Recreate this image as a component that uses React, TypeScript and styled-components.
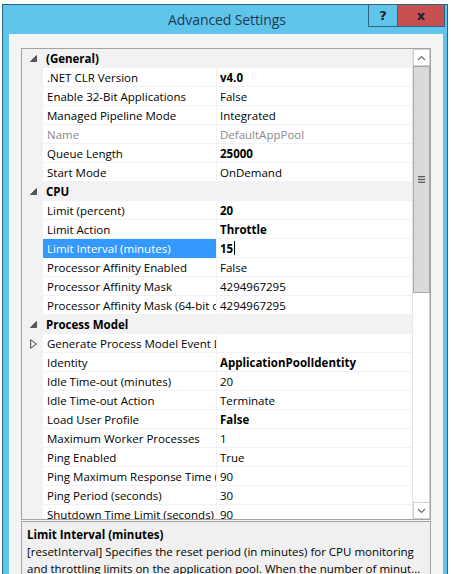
import styled, { createGlobalStyle } from 'styled-components'

const GlobalStyle = createGlobalStyle`
  html, body {
    margin: 0;
    background: #ffffff;
    overflow: hidden;
  }
  body {
    font-family: 'Open Sans', 'Noto Sans', sans-serif;
    color: #000;
  }
`

const Window = styled.div`
  margin: 4px 0 0 2px;
  width: 446px;
  height: 570px;
  box-sizing: border-box;
  border: 1px solid #2d6480;
  border-bottom: none;
  background: #60c5ea;
  padding: 0 4px 0 6px;
  display: flex;
  flex-direction: column;
`

const TitleBar = styled.div`
  height: 29px;
  flex-shrink: 0;
  display: grid;
  grid-template-columns: 1fr auto 1fr;
  margin-right: -2px;
`

const Title = styled.div`
  grid-column: 2;
  align-self: center;
  font-size: 14px;
  color: #1c3a4f;
  letter-spacing: -0.1px;
`

const CaptionButtons = styled.div`
  grid-column: 3;
  justify-self: end;
  align-self: start;
  display: flex;
  height: 21px;
  border: 1px solid #2d6480;
  border-top: none;
`

const CaptionButton = styled.div<{ $close?: boolean; $w: number }>`
  width: ${({ $w }) => $w}px;
  display: flex;
  align-items: center;
  justify-content: center;
  background: ${({ $close }) => ($close ? '#c75050' : '#60c5ea')};
  border-left: ${({ $close }) => ($close ? '1px solid #2d6480' : 'none')};
  font-family: 'DejaVu Sans', sans-serif;
  font-weight: 700;
  font-size: 13px;
  color: #1a2030;
`

const Panel = styled.div`
  flex: 1;
  min-height: 0;
  background: #f4f3f6;
  padding: 14px 12px 0 12px;
  display: flex;
  flex-direction: column;
  gap: 1px;
`

const Grid = styled.div`
  height: 472px;
  flex-shrink: 0;
  box-sizing: border-box;
  border: 1px solid #a3a3a3;
  background: #ffffff;
  display: flex;
`

const Rows = styled.div`
  flex: 1;
  overflow: hidden;
  font-size: 11.5px;
`

const RowLine = styled.div`
  height: 19px;
  display: grid;
  grid-template-columns: 21px 174px 1fr;
  align-items: stretch;
  background: #f2f1f4;
`

const Gutter = styled.div`
  display: flex;
  align-items: center;
  justify-content: center;
  padding-left: 1px;
`

const CatLabel = styled.div`
  grid-column: 2 / 4;
  display: flex;
  align-items: center;
  padding-left: 3px;
  font-weight: 700;
`

const NameCell = styled.div<{ $selected?: boolean; $disabled?: boolean }>`
  display: flex;
  align-items: center;
  padding-left: 4px;
  white-space: nowrap;
  overflow: hidden;
  background: ${({ $selected }) => ($selected ? '#3399ff' : '#ffffff')};
  color: ${({ $selected, $disabled }) => ($selected ? '#ffffff' : $disabled ? '#8a8a8a' : '#000')};
  border-bottom: 1px solid ${({ $selected }) => ($selected ? '#3399ff' : '#f2f1f4')};
  margin-right: 1px;
`

const ValueCell = styled.div<{ $bold?: boolean; $disabled?: boolean }>`
  display: flex;
  align-items: center;
  padding-left: 3px;
  white-space: nowrap;
  overflow: hidden;
  background: #ffffff;
  font-weight: ${({ $bold }) => ($bold ? 700 : 400)};
  color: ${({ $disabled }) => ($disabled ? '#8a8a8a' : '#000')};
  border-bottom: 1px solid #f2f1f4;
`

const Caret = styled.span`
  display: inline-block;
  width: 1px;
  height: 14px;
  margin-left: 1px;
  background: #000;
`

const ScrollBar = styled.div`
  width: 17px;
  display: flex;
  flex-direction: column;
  border-left: 1px solid #e6e6e6;
  background: #ffffff;
`

const ArrowButton = styled.div`
  height: 17px;
  box-sizing: border-box;
  border: 1px solid #d0d0d0;
  display: flex;
  align-items: center;
  justify-content: center;
  background: #ffffff;
`

const Thumb = styled.div`
  height: 227px;
  box-sizing: border-box;
  background: #dadada;
  border: 1px solid #a8a8a8;
  display: flex;
  align-items: center;
  justify-content: center;
`

const Track = styled.div`
  flex: 1;
  border-right: 1px solid #d0d0d0;
`

const Description = styled.div`
  flex: 1;
  min-height: 0;
  border: 1px solid #a3a3a3;
  border-bottom: none;
  background: #f0f0f0;
  padding: 5px 5px 0 5px;
  font-size: 11.5px;
  overflow: hidden;
`

const DescTitle = styled.div`
  font-weight: 700;
  line-height: 16px;
`

const DescLine = styled.div`
  line-height: 17px;
  white-space: nowrap;
  overflow: hidden;
  text-overflow: ellipsis;
`

type Row =
  | { kind: 'cat'; label: string }
  | {
      kind: 'prop'
      name: string
      value: string
      bold?: boolean
      disabled?: boolean
      selected?: boolean
      expandable?: boolean
    }

const rows: Row[] = [
  { kind: 'cat', label: '(General)' },
  { kind: 'prop', name: '.NET CLR Version', value: 'v4.0', bold: true },
  { kind: 'prop', name: 'Enable 32-Bit Applications', value: 'False' },
  { kind: 'prop', name: 'Managed Pipeline Mode', value: 'Integrated' },
  { kind: 'prop', name: 'Name', value: 'DefaultAppPool', disabled: true },
  { kind: 'prop', name: 'Queue Length', value: '25000', bold: true },
  { kind: 'prop', name: 'Start Mode', value: 'OnDemand' },
  { kind: 'cat', label: 'CPU' },
  { kind: 'prop', name: 'Limit (percent)', value: '20', bold: true },
  { kind: 'prop', name: 'Limit Action', value: 'Throttle', bold: true },
  { kind: 'prop', name: 'Limit Interval (minutes)', value: '15', bold: true, selected: true },
  { kind: 'prop', name: 'Processor Affinity Enabled', value: 'False' },
  { kind: 'prop', name: 'Processor Affinity Mask', value: '4294967295' },
  { kind: 'prop', name: 'Processor Affinity Mask (64-bit option)', value: '4294967295' },
  { kind: 'cat', label: 'Process Model' },
  { kind: 'prop', name: 'Generate Process Model Event Log Entry', value: '', expandable: true },
  { kind: 'prop', name: 'Identity', value: 'ApplicationPoolIdentity', bold: true },
  { kind: 'prop', name: 'Idle Time-out (minutes)', value: '20' },
  { kind: 'prop', name: 'Idle Time-out Action', value: 'Terminate' },
  { kind: 'prop', name: 'Load User Profile', value: 'False', bold: true },
  { kind: 'prop', name: 'Maximum Worker Processes', value: '1' },
  { kind: 'prop', name: 'Ping Enabled', value: 'True' },
  { kind: 'prop', name: 'Ping Maximum Response Time (seconds)', value: '90' },
  { kind: 'prop', name: 'Ping Period (seconds)', value: '30' },
  { kind: 'prop', name: 'Shutdown Time Limit (seconds)', value: '90' },
]

function Collapse() {
  return (
    <svg width="7" height="7" viewBox="0 0 7 7">
      <polygon points="6.5,0.5 6.5,6.5 0.5,6.5" fill="#595959" stroke="#404040" strokeWidth="0.8" />
    </svg>
  )
}

function Expand() {
  return (
    <svg width="7" height="10" viewBox="0 0 7 10">
      <polygon points="0.7,0.7 6.3,5 0.7,9.3" fill="none" stroke="#404040" strokeWidth="1" />
    </svg>
  )
}

function Chevron({ down }: { down?: boolean }) {
  return (
    <svg width="9" height="6" viewBox="0 0 9 6">
      <polyline
        points={down ? '1,1 4.5,4.5 8,1' : '1,5 4.5,1.5 8,5'}
        fill="none"
        stroke="#707070"
        strokeWidth="1.2"
      />
    </svg>
  )
}

function Grip() {
  return (
    <svg width="7" height="7" viewBox="0 0 7 7">
      <rect x="0" y="0" width="7" height="1.3" fill="#5a5a5a" />
      <rect x="0" y="2.8" width="7" height="1.3" fill="#5a5a5a" />
      <rect x="0" y="5.6" width="7" height="1.3" fill="#5a5a5a" />
    </svg>
  )
}

export default function App() {
  return (
    <>
      <GlobalStyle />
      <Window>
        <TitleBar>
          <Title>Advanced Settings</Title>
          <CaptionButtons>
            <CaptionButton $w={28}>?</CaptionButton>
            <CaptionButton $w={46} $close>
              x
            </CaptionButton>
          </CaptionButtons>
        </TitleBar>
        <Panel>
          <Grid>
            <Rows>
              {rows.map((r, i) =>
                r.kind === 'cat' ? (
                  <RowLine key={i}>
                    <Gutter>
                      <Collapse />
                    </Gutter>
                    <CatLabel>{r.label}</CatLabel>
                  </RowLine>
                ) : (
                  <RowLine key={i}>
                    <Gutter>{r.expandable && <Expand />}</Gutter>
                    <NameCell $selected={r.selected} $disabled={r.disabled}>
                      {r.name}
                    </NameCell>
                    <ValueCell $bold={r.bold} $disabled={r.disabled}>
                      {r.value}
                      {r.selected && <Caret />}
                    </ValueCell>
                  </RowLine>
                ),
              )}
            </Rows>
            <ScrollBar>
              <ArrowButton>
                <Chevron />
              </ArrowButton>
              <Thumb>
                <Grip />
              </Thumb>
              <Track />
              <ArrowButton>
                <Chevron down />
              </ArrowButton>
            </ScrollBar>
          </Grid>
          <Description>
            <DescTitle>Limit Interval (minutes)</DescTitle>
            <DescLine>
              [resetInterval] Specifies the reset period (in minutes) for CPU monitoring
            </DescLine>
            <DescLine>
              and throttling limits on the application pool. When the number of minutes elapsed
              since the last process accounting reset equals the number specified by this property
            </DescLine>
          </Description>
        </Panel>
      </Window>
    </>
  )
}
